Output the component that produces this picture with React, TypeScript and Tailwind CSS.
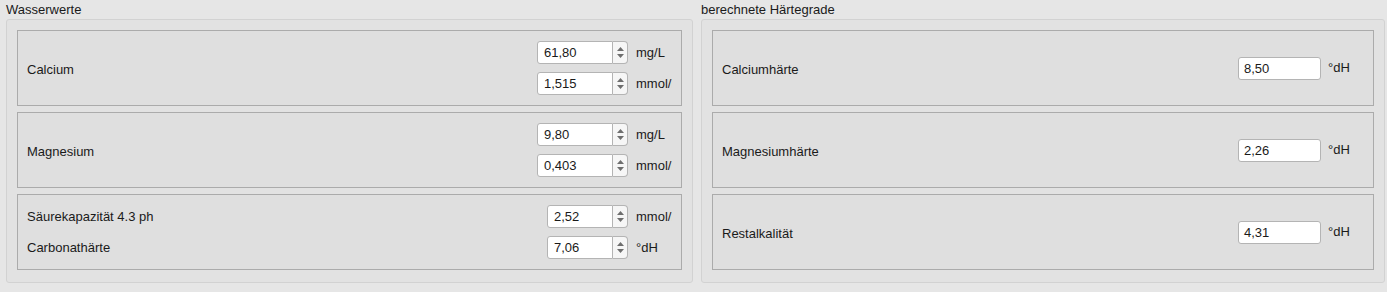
import React from "react";

const font = { fontFamily: '"Liberation Sans", Arial, sans-serif' };

const Spinner: React.FC = () => (
  <div className="h-[23px] w-[15px] border border-[#b4b4b4] border-l-0 rounded-r-[4px] bg-[#f6f6f6] flex items-center justify-center">
    <svg width="9" height="15" viewBox="0 0 9 15">
      <path d="M4.5 2 L8 6 L1 6 Z" fill="#6e6e6e" />
      <path d="M4.5 13 L8 9 L1 9 Z" fill="#6e6e6e" />
    </svg>
  </div>
);

type SpinProps = { value: string; unit: string; width: string };

const SpinRow: React.FC<SpinProps> = ({ value, unit, width }) => (
  <div className="flex items-center h-[23px]">
    <div
      className={`h-[23px] ${width} bg-white border border-[#b4b4b4] rounded-l-[3px] flex items-center pl-[6px] pt-[1px] text-[13px] text-[#1a1a1a]`}
    >
      {value}
    </div>
    <Spinner />
    <div className="ml-[8px] w-[36px] overflow-hidden whitespace-nowrap text-[13px] text-[#1a1a1a]">
      {unit}
    </div>
  </div>
);

const ResultRow: React.FC<{ value: string }> = ({ value }) => (
  <div className="flex items-center h-[23px]">
    <div className="h-[23px] w-[83px] bg-white border border-[#b4b4b4] rounded-[3px] flex items-center pl-[5px] pt-[1px] text-[13px] text-[#1a1a1a]">
      {value}
    </div>
    <div className="ml-[7px] w-[36px] text-[13px] text-[#1a1a1a]">°dH</div>
  </div>
);

const Box: React.FC<{ children: React.ReactNode }> = ({ children }) => (
  <div className="h-[76px] border border-[#ababab] bg-[#dfdfdf] flex items-center justify-between pl-[9px] pr-[9px]">
    {children}
  </div>
);

const Label: React.FC<{ children: React.ReactNode }> = ({ children }) => (
  <span className="pt-[3px] text-[13px] text-[#1a1a1a]">{children}</span>
);

const Group: React.FC<{ title: string; width: string; children: React.ReactNode }> = ({
  title,
  width,
  children,
}) => (
  <div className={`${width} flex flex-col`}>
    <div className="h-[19px] pt-[2px] text-[13px] text-[#1a1a1a] leading-[16px]">{title}</div>
    <div className="h-[264px] border border-[#d2d2d2] rounded-[3px] bg-[#e2e2e2] pt-[10px] px-[10px] flex flex-col gap-[6px]">
      {children}
    </div>
  </div>
);

const App: React.FC = () => {
  return (
    <div className="w-[1387px] h-[292px] bg-[#e6e6e6] pl-[6px] flex gap-[8px]" style={font}>
      <Group title="Wasserwerte" width="w-[687px]">
        <Box>
          <Label>Calcium</Label>
          <div className="flex flex-col gap-[8px]">
            <SpinRow value="61,80" unit="mg/L" width="w-[76px]" />
            <SpinRow value="1,515" unit="mmol/L" width="w-[76px]" />
          </div>
        </Box>
        <Box>
          <Label>Magnesium</Label>
          <div className="flex flex-col gap-[8px]">
            <SpinRow value="9,80" unit="mg/L" width="w-[76px]" />
            <SpinRow value="0,403" unit="mmol/L" width="w-[76px]" />
          </div>
        </Box>
        <Box>
          <div className="flex flex-col gap-[8px] text-[13px] text-[#1a1a1a]">
            <div className="h-[23px] flex items-center pt-[1px]">Säurekapazität 4.3 ph</div>
            <div className="h-[23px] flex items-center pt-[1px]">Carbonathärte</div>
          </div>
          <div className="flex flex-col gap-[8px]">
            <SpinRow value="2,52" unit="mmol/L" width="w-[66px]" />
            <SpinRow value="7,06" unit="°dH" width="w-[66px]" />
          </div>
        </Box>
      </Group>
      <Group title="berechnete Härtegrade" width="w-[684px]">
        <Box>
          <Label>Calciumhärte</Label>
          <ResultRow value="8,50" />
        </Box>
        <Box>
          <Label>Magnesiumhärte</Label>
          <ResultRow value="2,26" />
        </Box>
        <Box>
          <Label>Restalkalität</Label>
          <ResultRow value="4,31" />
        </Box>
      </Group>
    </div>
  );
};

export default App;
